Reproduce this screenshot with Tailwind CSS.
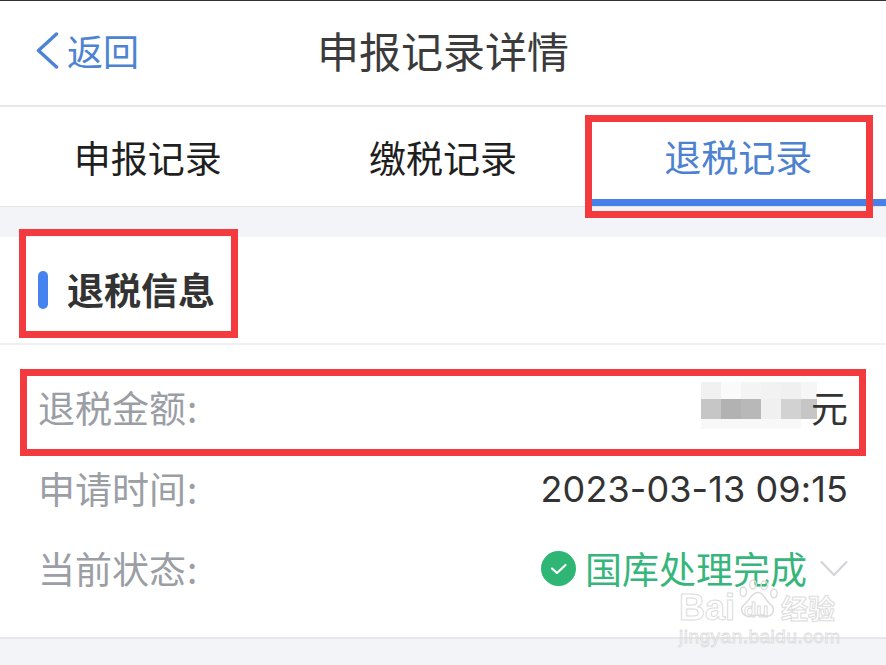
<!DOCTYPE html>
<html lang="zh-CN">
<head>
<meta charset="UTF-8">
<title>申报记录详情</title>
<script src="https://cdn.jsdelivr.net/npm/@tailwindcss/browser@4"></script>
</head>
<body class="bg-[#f3f4f8] font-['Noto_Sans_CJK_SC','Noto_Sans',sans-serif]">
<div class="relative w-[886px] h-[665px] overflow-hidden">

  <!-- 顶部导航 -->
  <header class="grid grid-cols-[1fr_auto_1fr] items-center h-[107px] pb-[6px] bg-white border-t border-t-[#333] border-b-2 border-b-[#e8e8e8]">
    <div class="flex items-center pl-[36px] gap-[8px] text-[#4c84d2]">
      <svg class="w-[23px] h-[37px]" viewBox="0 0 23 37" fill="none" stroke="#4c84d2" stroke-width="3.4" stroke-linecap="round" stroke-linejoin="round"><path d="M20.5 2 L2.5 18.5 L20.5 35"/></svg>
      <span class="text-[36px] leading-none">返回</span>
    </div>
    <h1 class="text-[42px] leading-none text-[#3b3b3b]">申报记录详情</h1>
    <div></div>
  </header>

  <!-- 选项卡 -->
  <nav class="flex h-[100px] bg-white border-b border-[#e4e4e6] text-[37px]">
    <div class="flex-1 flex items-center justify-center pt-[2px] text-[#1f1f1f]">申报记录</div>
    <div class="flex-1 flex items-center justify-center pt-[2px] text-[#1f1f1f]">缴税记录</div>
    <div class="flex-1 flex items-center justify-center pt-[8px] text-[#4c82d0] border-b-[7px] border-[#4680e8]">退税记录</div>
  </nav>

  <main class="mt-[30px] bg-white border-b-2 border-[#e6e7ea]">
    <div class="flex items-center h-[108px] pl-[38px] gap-[19px] border-b-2 border-[#f0f0f2]">
      <span class="w-[10px] h-[38px] rounded-full bg-[#4583f0]"></span>
      <h2 class="text-[37px] font-bold text-[#333]">退税信息</h2>
    </div>
    <div class="h-[292px] pl-[38px] pr-[38px] pt-[22px] text-[37px] leading-[81px]">
      <div class="flex justify-between items-center h-[81px]">
        <span class="text-[#9b9ea4]">退税金额<span class="ml-[1px]">:</span></span>
        <span class="flex items-center text-[#333]">
          <svg class="w-[116px] h-[47px] -mr-[6px] -mt-1" viewBox="0 0 116 47">
            <rect x="0" width="20" height="17" fill="#f1f1f1"/><rect x="20" width="20" height="17" fill="#fafafa"/><rect x="40" width="20" height="17" fill="#f4f4f4"/><rect x="60" width="20" height="17" fill="#f2f2f2"/><rect x="80" width="20" height="17" fill="#f0f0f0"/><rect x="100" width="16" height="17" fill="#f6f6f6"/>
            <rect x="0" y="17" width="20" height="20" fill="#c6c6c6"/><rect x="20" y="17" width="20" height="20" fill="#b2b2b2"/><rect x="40" y="17" width="20" height="20" fill="#b8b8b8"/><rect x="60" y="17" width="20" height="20" fill="#f0f0f0"/><rect x="80" y="17" width="20" height="20" fill="#d2d2d2"/><rect x="100" y="17" width="16" height="20" fill="#c6c6c6"/>
            <rect x="0" y="37" width="100" height="10" fill="#f8f8f8"/>
          </svg>
          <span class="relative">元</span>
        </span>
      </div>
      <div class="flex justify-between items-center h-[81px]">
        <span class="text-[#9b9ea4]">申请时间<span class="ml-[1px]">:</span></span>
        <span class="text-[#333] text-[36px] tracking-[0.1px] pt-[2px] font-['Inter',sans-serif]">2023-03-13 09:15</span>
      </div>
      <div class="flex justify-between items-center h-[81px] -mt-px">
        <span class="text-[#9b9ea4]">当前状态<span class="ml-[1px]">:</span></span>
        <span class="flex items-center text-[#37b67c]">
          <svg class="w-[35px] h-[35px] mr-[9px]" viewBox="0 0 35 35"><circle cx="17.5" cy="17.5" r="17.5" fill="#2fb574"/><path d="M11 17.5 L16 22 L24.5 14" fill="none" stroke="#fff" stroke-width="2.2" stroke-linecap="round" stroke-linejoin="round"/></svg>
          <span>国库处理完成</span>
          <svg class="w-[28px] h-[18px] ml-[13px]" viewBox="0 0 28 18" fill="none" stroke="#d4d5d8" stroke-width="2.2" stroke-linecap="round" stroke-linejoin="round"><path d="M1.5 2 L14 15 L26.5 2"/></svg>
        </span>
      </div>
    </div>
  </main>

  <!-- 红色标注框 -->
  <div class="absolute left-[585px] top-[115px] w-[288px] h-[103px] border-[7px] border-[#f33b3f]"></div>
  <div class="absolute left-[19px] top-[229px] w-[219px] h-[109px] border-[7px] border-[#f33b3f]"></div>
  <div class="absolute left-[20px] top-[369px] w-[846px] h-[87px] border-[7px] border-[#f33b3f]"></div>

  <!-- 百度经验水印 -->
  <svg class="absolute left-[732px] top-[578px] w-[50px] h-[42px]" viewBox="0 0 62 50" fill="none" stroke="#dcdcdc" stroke-width="1.8">
    <ellipse cx="14" cy="16" rx="4" ry="6"/><ellipse cx="26" cy="7" rx="4" ry="5.5"/><ellipse cx="40" cy="8" rx="4" ry="5.5"/><ellipse cx="52" cy="18" rx="4" ry="5.5"/>
    <path d="M32 17 C24 17 23 26 16 31 C8 37 13 48 23 46 C28 45 36 45 41 46 C51 48 55 37 47 31 C41 26 40 17 32 17 Z"/>
  </svg>
  <span class="absolute left-[679px] top-[586px] text-[36px] leading-[44px] font-bold text-transparent [-webkit-text-stroke:1px_#dcdcdc] font-['Liberation_Sans',sans-serif]">Bai</span>
  <span class="absolute left-[744px] top-[597px] text-[20px] leading-[26px] font-bold text-transparent [-webkit-text-stroke:1px_#dcdcdc] font-['Liberation_Sans',sans-serif]">du</span>
  <span class="absolute left-[781px] top-[590px] text-[27px] leading-[36px] font-bold text-transparent [-webkit-text-stroke:1px_#dcdcdc]">经验</span>
  <span class="absolute left-[679px] top-[625px] text-[19px] leading-[24px] tracking-[0.5px] text-transparent [-webkit-text-stroke:0.8px_#dcdcdc] font-['Liberation_Sans',sans-serif]">jingyan.baidu.com</span>
</div>
</body>
</html>
